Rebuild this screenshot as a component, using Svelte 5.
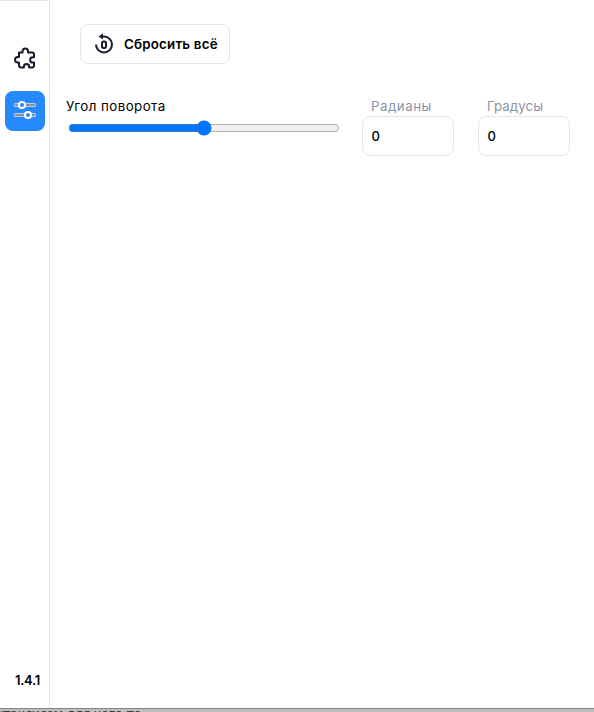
<script>
  let angle = $state(0);
  const fields = [
    { id: 'rad', label: 'Радианы', spacing: 0.48 },
    { id: 'deg', label: 'Градусы', spacing: 0.03 }
  ];
  const reset = () => (angle = 0);
</script>

<div class="screen">
  <div class="window">
    <nav>
      <button class="tab" aria-label="Модули">
        <svg width="24" height="24" viewBox="0 0 24 24" fill="none" stroke="#1b1b2d" stroke-width="2" stroke-linejoin="round">
          <path transform="translate(0 -.5)" d="M6 6 H9.6 V4.6 A2.7 2.7 0 0 1 15 4.6 V6 H19 Q21 6 21 8 V10.7 H19.8 A2.7 2.7 0 0 0 19.8 16.1 H21 V19 Q21 21 19 21 H16.1 V20.2 A2.6 2.6 0 0 0 10.9 20.2 V21 H8 Q6 21 6 19 V16 H4.7 A2.7 2.7 0 0 1 4.7 10.6 H6 Z" />
        </svg>
      </button>
      <button class="tab active" aria-label="Настройки">
        <svg width="24" height="24" viewBox="0 0 24 24">
          <g fill="#8b8f9f" stroke="#b4cdf0">
            <rect x="1.5" y="4.5" width="21" height="3" rx=".5" />
            <rect x="1.5" y="14.5" width="21" height="3" rx=".5" />
          </g>
          <g fill="#268aff" stroke="#fff" stroke-width="2">
            <circle cx="9" cy="6" r="3.1" />
            <circle cx="15" cy="16" r="3.1" />
          </g>
        </svg>
      </button>
      <span class="version">1.4.1</span>
    </nav>
    <main>
      <button class="reset" onclick={reset}>
        <svg width="24" height="24" viewBox="0 0 24 24" fill="none" stroke="#1b1b2d" stroke-width="2">
          <path d="M4 12.5 A8 8 0 1 0 12 4.5 H9.5" />
          <path d="M11 1.2 V7.6 L6.5 4.4 Z" fill="#1b1b2d" stroke="none" />
          <rect x="10" y="9.5" width="4" height="6.4" rx="1.7" />
        </svg>
        <span>Сбросить всё</span>
      </button>
      <div class="row">
        <label class="slider">
          <span>Угол поворота</span>
          <input type="range" min="-180" max="180" bind:value={angle} />
        </label>
        {#each fields as f (f.id)}
          <label class="field">
            <span style:letter-spacing="{f.spacing}px">{f.label}</span>
            <input type="text" bind:value={angle} />
          </label>
        {/each}
      </div>
    </main>
  </div>
  <div class="behind">нтаксисом для чего-то</div>
</div>

<style>
  :global(body) { margin: 0; overflow: hidden; background: #fff; }
  .screen { width: 594px; height: 712px; overflow: hidden; display: flex; flex-direction: column; font: 500 13.33px Inter, "Open Sans", sans-serif; color: #000; }
  .window { height: 708px; display: flex; background: #fff; }
  nav { box-sizing: border-box; width: 50px; border-top: 1px solid #e6e6e8; border-right: 1px solid #e6e6e8; display: flex; flex-direction: column; align-items: flex-start; padding: 38px 0 20px 5px; gap: 12px; }
  .tab { width: 40px; height: 40px; padding: 0; border: 0; border-radius: 8px; background: none; display: flex; align-items: center; justify-content: center; }
  .active { background: #268aff; }
  .version { margin: auto 0 0 10px; font-size: 13px; line-height: 16px; font-weight: 600; letter-spacing: -0.3px; }
  main { flex: 1; padding-top: 24px; }
  .reset { box-sizing: border-box; margin-left: 30px; width: 150px; height: 40px; padding: 0 0 0 11px; border: 1px solid #e6e6e8; border-radius: 8px; background: #fff; display: flex; align-items: center; gap: 8px; font: 600 13.33px Inter, sans-serif; color: #000; white-space: nowrap; }
  .reset span { letter-spacing: 0.2px; }
  .row { display: flex; padding: 34px 0 0 16px; }
  .slider { width: 296px; display: flex; flex-direction: column; font-weight: 400; letter-spacing: 0.43px; line-height: 16px; box-sizing: border-box; }
  .slider input { width: 272px; height: 16px; margin: 6px 0 0 2px; }
  .field { width: 92px; margin-right: 24px; flex: none; display: flex; flex-direction: column; line-height: 16px; }
  .field span { margin-left: 9px; height: 18px; color: #8a94a8; font-weight: 400; }
  .field input { box-sizing: border-box; width: 92px; height: 40px; border: 1px solid #e6e6e8; border-radius: 8px; padding: 0 8.5px; background: #fff; color: #000; font: 500 13px Inter, sans-serif; outline: 0; }
  .behind { height: 4px; box-sizing: border-box; border-top: 1px solid #858585; background: #bdbdbd; color: #3d3d3d; font: 400 13px/9px "DejaVu Sans", sans-serif; letter-spacing: -0.5px; overflow: hidden; white-space: nowrap; text-indent: -5px; }
</style>
